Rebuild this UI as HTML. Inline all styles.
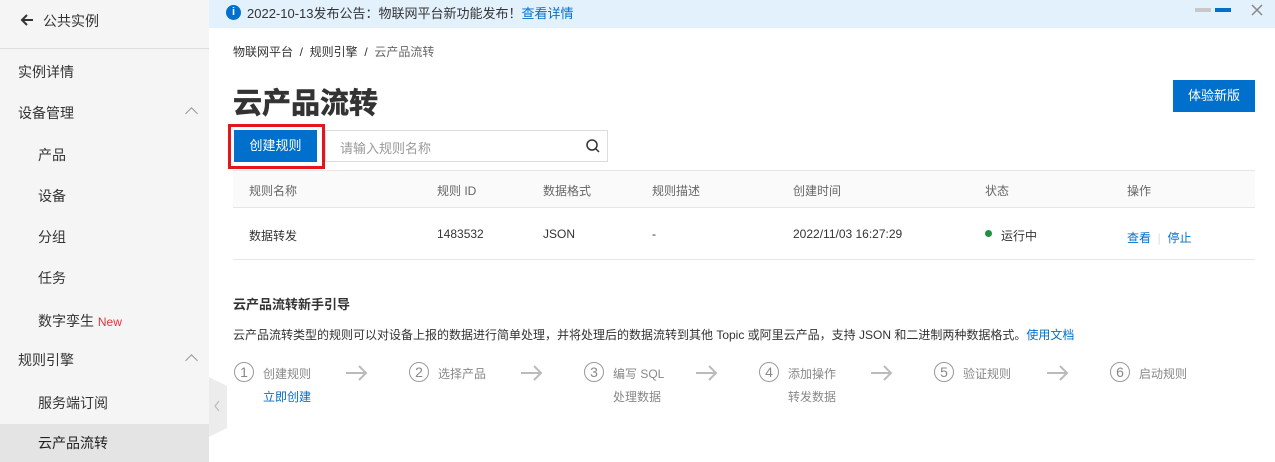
<!DOCTYPE html><html><head><meta charset="utf-8"><style>
*{margin:0;padding:0;box-sizing:border-box}
body{width:1275px;height:462px;overflow:hidden;font-family:"Liberation Sans","Noto Sans CJK SC",sans-serif;font-size:12px;color:#333;background:#fff;position:relative}
.a{position:absolute;white-space:nowrap}
.side{position:absolute;left:0;top:0;width:209px;height:462px;background:#f5f5f5}
.n{position:absolute;font-size:14px;color:#333}
.chev{position:absolute;left:187px;width:9px;height:9px;border-left:1px solid #999;border-top:1px solid #999;transform:rotate(45deg)}
.c{position:absolute;width:20px;height:20px;border:1px solid #999;border-radius:50%;text-align:center;line-height:18px;font-size:14px;color:#888}
.s{position:absolute;font-size:12px;color:#888}
.ar{position:absolute}
</style></head><body>
<div class="side">
<svg class="a" style="left:20px;top:13px" width="14" height="14" viewBox="0 0 14 14"><path d="M13 7H2M7 2L2 7l5 5" fill="none" stroke="#333" stroke-width="2"/></svg>
<div class="n" style="left:43px;top:11px;font-size:14px">公共实例</div>
<div style="position:absolute;left:0;top:48px;width:209px;height:1px;background:#ddd"></div>
<div class="n" style="left:18px;top:62px">实例详情</div>
<div class="n" style="left:18px;top:103px">设备管理</div><div class="chev" style="top:109px"></div>
<div class="n" style="left:38px;top:145px">产品</div>
<div class="n" style="left:38px;top:186px">设备</div>
<div class="n" style="left:38px;top:227px">分组</div>
<div class="n" style="left:38px;top:268px">任务</div>
<div class="n" style="left:38px;top:311px">数字孪生 <span style="color:#e5323f;font-size:12px">New</span></div>
<div class="n" style="left:18px;top:350px">规则引擎</div><div class="chev" style="top:356px"></div>
<div class="n" style="left:38px;top:393px">服务端订阅</div>
<div style="position:absolute;left:0;top:424px;width:209px;height:38px;background:#e4e4e4"></div>
<div class="n" style="left:38px;top:433px;color:#222">云产品流转</div>
</div>
<div style="position:absolute;left:209px;top:377px;width:18px;height:60px;background:#ececec;clip-path:polygon(0 0,100% 15%,100% 85%,0 100%)"></div>
<svg class="a" style="left:213px;top:400px" width="8" height="12" viewBox="0 0 8 12"><path d="M6 1L2 6l4 5" fill="none" stroke="#bbb" stroke-width="1.2"/></svg>
<div style="position:absolute;left:209px;top:0;width:1066px;height:28px;background:#e3f1fc"></div>
<div class="a" style="left:226px;top:5px;width:15px;height:15px;border-radius:50%;background:#0070cc;color:#fff;font-size:11px;font-weight:bold;text-align:center;line-height:15px">i</div>
<div class="a" style="left:247px;top:3px;font-size:13px;color:#333">2022-10-13发布公告：物联网平台新功能发布！<span style="color:#0070cc">查看详情</span></div>
<div class="a" style="left:1195px;top:8px;width:16px;height:4px;background:#c8c8c8"></div>
<div class="a" style="left:1215px;top:8px;width:16px;height:4px;background:#0070cc"></div>
<svg class="a" style="left:1251px;top:4px" width="12" height="12" viewBox="0 0 12 12"><path d="M1 1l10 10M11 1L1 11" stroke="#888" stroke-width="1.5"/></svg>
<div class="a" style="left:233px;top:43px;color:#333">物联网平台 &nbsp;/&nbsp; 规则引擎 &nbsp;/&nbsp; <span style="color:#666">云产品流转</span></div>
<div class="a" style="left:233px;top:80px;font-size:29px;font-weight:bold;color:#333;-webkit-text-stroke:0.6px #333">云产品流转</div>
<div class="a" style="left:1173px;top:80px;width:82px;height:32px;background:#0070cc;color:#fff;font-size:13px;text-align:center;line-height:32px">体验新版</div>
<div class="a" style="left:228px;top:124px;width:97px;height:45px;border:3px solid #e3161e"></div>
<div class="a" style="left:234px;top:130px;width:83px;height:32px;background:#0070cc;color:#fff;font-size:13px;text-align:center;line-height:32px">创建规则</div>
<div class="a" style="left:325px;top:130px;width:283px;height:32px;border:1px solid #ddd"></div>
<div class="a" style="left:340px;top:138px;font-size:13px;color:#999">请输入规则名称</div>
<svg class="a" style="left:585px;top:138px" width="16" height="16" viewBox="0 0 16 16"><circle cx="7" cy="7" r="5" fill="none" stroke="#333" stroke-width="1.5"/><path d="M10.5 10.5L14 14" stroke="#333" stroke-width="1.5"/></svg>
<div class="a" style="left:233px;top:170px;width:1022px;height:38px;background:#fafafa;border-top:1px solid #e6e6e6;border-bottom:1px solid #e6e6e6"></div>
<div class="a" style="left:249px;top:182px;color:#666">规则名称</div>
<div class="a" style="left:437px;top:182px;color:#666">规则 ID</div>
<div class="a" style="left:543px;top:182px;color:#666">数据格式</div>
<div class="a" style="left:652px;top:182px;color:#666">规则描述</div>
<div class="a" style="left:793px;top:182px;color:#666">创建时间</div>
<div class="a" style="left:985px;top:182px;color:#666">状态</div>
<div class="a" style="left:1127px;top:182px;color:#666">操作</div>
<div class="a" style="left:233px;top:259px;width:1022px;height:1px;background:#e6e6e6"></div>
<div class="a" style="left:249px;top:227px">数据转发</div>
<div class="a" style="left:437px;top:227px">1483532</div>
<div class="a" style="left:543px;top:227px">JSON</div>
<div class="a" style="left:652px;top:227px">-</div>
<div class="a" style="left:793px;top:227px">2022/11/03 16:27:29</div>
<div class="a" style="left:985px;top:230px;width:7px;height:7px;border-radius:50%;background:#1e9140"></div>
<div class="a" style="left:1001px;top:227px">运行中</div>
<div class="a" style="left:1127px;top:229px;color:#0070cc">查看 <span style="color:#ddd">&nbsp;|&nbsp;</span> 停止</div>
<div class="a" style="left:233px;top:294px;font-size:13px;font-weight:bold;color:#333">云产品流转新手引导</div>
<div class="a" style="left:233px;top:326px;color:#333">云产品流转类型的规则可以对设备上报的数据进行简单处理，并将处理后的数据流转到其他 Topic 或阿里云产品，支持 JSON 和二进制两种数据格式。<span style="color:#0070cc">使用文档</span></div>
<div class="c" style="left:234px;top:362px">1</div><div class="s" style="left:263px;top:365px">创建规则</div><div class="s" style="left:263px;top:388px;color:#0070cc">立即创建</div>
<div class="c" style="left:409px;top:362px">2</div><div class="s" style="left:438px;top:365px">选择产品</div>
<div class="c" style="left:584px;top:362px">3</div><div class="s" style="left:613px;top:365px">编写 SQL</div><div class="s" style="left:613px;top:388px">处理数据</div>
<div class="c" style="left:759px;top:362px">4</div><div class="s" style="left:788px;top:365px">添加操作</div><div class="s" style="left:788px;top:388px">转发数据</div>
<div class="c" style="left:934px;top:362px">5</div><div class="s" style="left:963px;top:365px">验证规则</div>
<div class="c" style="left:1110px;top:362px">6</div><div class="s" style="left:1139px;top:365px">启动规则</div>
<svg class="a" style="left:0;top:0" width="1275" height="462"><g fill="none" stroke="#bbb" stroke-width="2">
<path d="M346 373h20M359 366l7 7-7 7"/><path d="M521 373h20M534 366l7 7-7 7"/><path d="M696 373h20M709 366l7 7-7 7"/><path d="M871 373h20M884 366l7 7-7 7"/><path d="M1047 373h20M1060 366l7 7-7 7"/></g></svg>
</body></html>
